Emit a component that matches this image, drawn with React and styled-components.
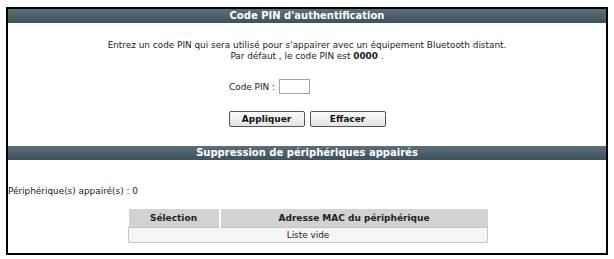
import React, { useState } from 'react'
import styled, { createGlobalStyle } from 'styled-components'

const GlobalStyle = createGlobalStyle`
  html, body {
    margin: 0;
    padding: 0;
    background: #fff;
  }
  body {
    font-family: "DejaVu Sans", Verdana, sans-serif;
    font-size: 8.9px;
    color: #222;
  }
`

function App() {
  const [pin, setPin] = useState('')
  return (
    <>
      <GlobalStyle />
      <Frame>
        <SectionTitle>Code PIN d'authentification</SectionTitle>
        <Intro>
          <p>Entrez un code PIN qui sera utilisé pour s'appairer avec un équipement Bluetooth distant.</p>
          <p>Par défaut , le code PIN est <b>0000</b> .</p>
        </Intro>
        <PinRow>
          <label htmlFor="pin">Code PIN :</label>
          <PinInput id="pin" value={pin} onChange={e => setPin(e.target.value)} />
        </PinRow>
        <Buttons>
          <Button>Appliquer</Button>
          <Button>Effacer</Button>
        </Buttons>
        <SectionTitle>Suppression de périphériques appairés</SectionTitle>
        <Count>Périphérique(s) appairé(s) : 0</Count>
        <TableWrap>
          <Table>
            <thead>
              <tr>
                <Th width="90px">Sélection</Th>
                <Th>Adresse MAC du périphérique</Th>
              </tr>
            </thead>
            <tbody>
              <tr>
                <Td colSpan={2}>Liste vide</Td>
              </tr>
            </tbody>
          </Table>
        </TableWrap>
      </Frame>
    </>
  )
}

export default App

const Frame = styled.div`
  box-sizing: border-box;
  margin: 7px 0 0 6px;
  width: 602px;
  height: 248px;
  border: 2px solid #000;
  background: #fff;
`

const SectionTitle = styled.div`
  height: 14px;
  line-height: 14px;
  background: linear-gradient(#5b7079, #3c515b);
  color: #fff;
  font-weight: bold;
  font-size: 10px;
  text-align: center;
`

const Intro = styled.div`
  padding-top: 17px;
  text-align: center;
  p {
    margin: 0;
    line-height: 11px;
  }
  b {
    font-weight: bold;
  }
`

const PinRow = styled.div`
  margin-top: 17px;
  display: flex;
  justify-content: center;
  align-items: center;
  gap: 4px;
  padding-right: 75px;
`

const PinInput = styled.input`
  box-sizing: border-box;
  width: 31px;
  height: 15px;
  border: 1px solid #9aa6b2;
  padding: 0 2px;
  font: inherit;
`

const Buttons = styled.div`
  margin-top: 17px;
  margin-bottom: 19px;
  display: flex;
  justify-content: center;
  gap: 5px;
`

const Button = styled.button`
  box-sizing: border-box;
  width: 76px;
  height: 16px;
  padding: 0;
  border: 1px solid #555;
  border-radius: 2px;
  background: linear-gradient(#fafafa, #e4e4e4);
  font-family: inherit;
  font-size: 9px;
  font-weight: bold;
  color: #111;
`

const Count = styled.div`
  margin-top: 26px;
  height: 10px;
  line-height: 10px;
`

const TableWrap = styled.div`
  margin-top: 13px;
  padding-left: 120px;
`

const Table = styled.table`
  width: 360px;
  border-collapse: collapse;
`

const Th = styled.th`
  width: ${p => p.width || 'auto'};
  height: 18px;
  padding: 0;
  background: #d2d2d2;
  border-left: 2px solid #fff;
  font-size: 9px;
  font-weight: bold;
  color: #222;
  text-align: center;
  &:first-child {
    border-left: 0;
  }
`

const Td = styled.td`
  height: 14px;
  padding: 0;
  border: 1px solid #c6c6c6;
  background: #f5f5f5;
  text-align: center;
`
